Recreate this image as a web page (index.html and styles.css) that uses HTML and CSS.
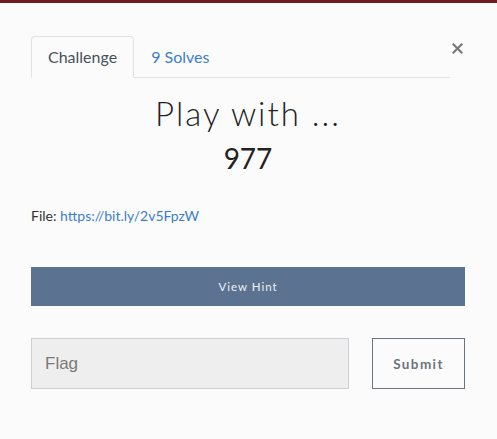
FILE: index.html
```html
<!DOCTYPE html>
<html>
<head>
<meta charset="utf-8">
<link rel="stylesheet" href="styles.css">
</head>
<body>
<div class="topbar"></div>
<div class="modal">
  <div class="header">
    <ul class="tabs">
      <li class="tab active">Challenge</li>
      <li class="tab"><a href="#">9 Solves</a></li>
    </ul>
    <button class="close" aria-label="Close">
      <svg width="11" height="11" viewBox="0 0 11 11"><path d="M1.5 1.5 L9.5 9.5 M9.5 1.5 L1.5 9.5" stroke="#7a7a7a" stroke-width="2.2" stroke-linecap="square"/></svg>
    </button>
  </div>
  <h2 class="title">Play with ...</h2>
  <h3 class="value">977</h3>
  <p class="file">File: <a href="#">https://bit.ly/2v5FpzW</a></p>
  <div class="hint">View Hint</div>
  <form class="submit-row">
    <input class="flag" type="text" placeholder="Flag">
    <button class="submit" type="button">Submit</button>
  </form>
</div>
</body>
</html>
```
FILE: styles.css
```css
html, body {
  margin: 0;
  padding: 0;
  background: #fbfbfc;
  font-family: "Lato", "Open Sans", sans-serif;
  color: #333;
}
.topbar {
  height: 3px;
  background: #6e1c22;
}
.modal {
  padding: 33px 32px 0 31px;
}
.header {
  display: flex;
  align-items: flex-start;
}
.tabs {
  flex: 1;
  display: flex;
  list-style: none;
  margin: 0;
  padding: 0;
  border-bottom: 1px solid #dee2e6;
}
.tab {
  padding: 8px 16px;
  line-height: 24px;
  font-size: 16px;
  border: 1px solid transparent;
  border-radius: 4px 4px 0 0;
  margin-bottom: -1px;
  color: #495057;
}
.tab.active {
  border-color: #dee2e6 #dee2e6 #fbfbfc;
  background: #fbfbfc;
}
.tab a {
  color: #3b80c6;
  text-decoration: none;
}
.close {
  background: none;
  border: 0;
  padding: 0;
  margin: 6px 2px 0 1px;
  width: 12px;
  height: 12px;
  display: flex;
  align-items: center;
  justify-content: center;
}
.title {
  margin: 15px 0 0;
  text-align: center;
  font-size: 33px;
  line-height: 40px;
  font-weight: 300;
  letter-spacing: 2px;
  color: #222;
}
.value {
  margin: 8px 0 0;
  text-align: center;
  font-size: 28px;
  line-height: 34px;
  font-weight: 400;
  color: #222;
}
.file {
  margin: 31px 0 0;
  font-size: 14px;
  line-height: 20px;
  color: #333;
}
.file a {
  color: #3b80c6;
  text-decoration: none;
}
.hint {
  margin-top: 41px;
  height: 39px;
  line-height: 40px;
  background: #5b7290;
  color: #eef1f5;
  text-align: center;
  font-size: 11.5px;
  letter-spacing: 1px;
}
.submit-row {
  display: flex;
  gap: 23px;
  margin-top: 32px;
}
.flag {
  box-sizing: border-box;
  width: 318px;
  height: 51px;
  background: #eeeeee;
  border: 1px solid #ccd0d6;
  padding: 0 13px;
  font-family: "Liberation Sans", Arial, sans-serif;
  font-size: 17px;
  color: #333;
  outline: none;
}
.flag::placeholder {
  color: #7a7a7a;
}
.submit {
  box-sizing: border-box;
  width: 93px;
  height: 51px;
  background: transparent;
  border: 1px solid #6c757d;
  font-family: "Lato", sans-serif;
  font-weight: 700;
  font-size: 13.5px;
  letter-spacing: 1.4px;
  color: #6c757d;
}
```
